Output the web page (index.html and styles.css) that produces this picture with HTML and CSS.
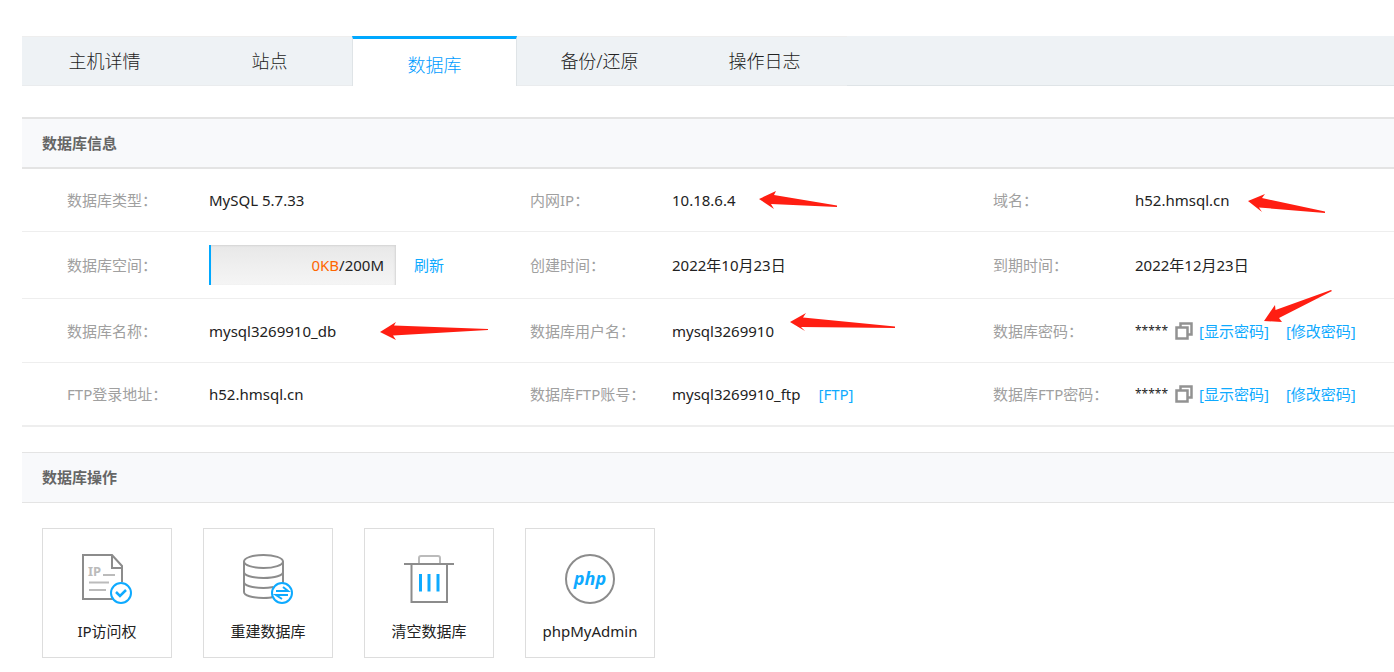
FILE: index.html
```html
<!DOCTYPE html>
<html lang="zh-CN">
<head>
<meta charset="utf-8">
<meta name="viewport" content="width=device-width, initial-scale=1">
<title>数据库</title>
<link rel="stylesheet" href="styles.css">
</head>
<body>
<svg class="symbols" aria-hidden="true">
  <symbol id="copy" viewBox="0 0 18 18">
    <path fill="none" stroke="#929292" stroke-width="2.500" d="M5.500 1.500h11v11h-11z"/>
    <path fill="#fff" stroke="#929292" stroke-width="2.500" d="M1.500 5.500h11v11h-11z"/>
  </symbol>
</svg>
<nav class="tabs">
  <a class="tab" href="#">主机详情</a>
  <a class="tab" href="#">站点</a>
  <a class="tab active" href="#" aria-current="page">数据库</a>
  <a class="tab" href="#">备份/还原</a>
  <a class="tab" href="#">操作日志</a>
</nav>
<main>
  <section class="panel">
    <h2 class="heading strong">数据库信息</h2>
    <table class="info">
      <colgroup>
        <col class="label"><col class="value"><col class="label"><col class="value"><col class="label"><col>
      </colgroup>
      <tbody>
        <tr>
          <th scope="row">数据库类型：</th><td>MySQL 5.7.33</td>
          <th scope="row">内网IP：</th><td>10.18.6.4</td>
          <th scope="row">域名：</th><td>h52.hmsql.cn</td>
        </tr>
        <tr class="tall">
          <th scope="row">数据库空间：</th>
          <td><div class="line space"><span class="quota"><span class="used">0KB</span>/200M</span><button class="link" type="button">刷新</button></div></td>
          <th scope="row">创建时间：</th><td>2022年10月23日</td>
          <th scope="row">到期时间：</th><td>2022年12月23日</td>
        </tr>
        <tr class="middle">
          <th scope="row">数据库名称：</th><td>mysql3269910_db</td>
          <th scope="row">数据库用户名：</th><td>mysql3269910</td>
          <th scope="row">数据库密码：</th>
          <td><div class="line secret"><span class="stars">*****</span><button class="copy" type="button" aria-label="复制"><svg width="18" height="18"><use href="#copy"/></svg></button><button class="link" type="button">[显示密码]</button><button class="link next" type="button">[修改密码]</button></div></td>
        </tr>
        <tr>
          <th scope="row">FTP登录地址：</th><td>h52.hmsql.cn</td>
          <th scope="row">数据库FTP账号：</th>
          <td><div class="line space"><span>mysql3269910_ftp</span><a class="link" href="#">[FTP]</a></div></td>
          <th scope="row">数据库FTP密码：</th>
          <td><div class="line secret"><span class="stars">*****</span><button class="copy" type="button" aria-label="复制"><svg width="18" height="18"><use href="#copy"/></svg></button><button class="link" type="button">[显示密码]</button><button class="link next" type="button">[修改密码]</button></div></td>
        </tr>
      </tbody>
    </table>
  </section>
  <section class="panel operations">
    <h2 class="heading">数据库操作</h2>
    <div class="cards">
      <button class="card" type="button">
        <svg width="50" height="50" viewBox="0 0 50 50" fill="none" stroke="#8c8c8c" stroke-width="2">
          <path d="M40 28V12L30 1H1v44h31M30 1v13h10"/>
          <path stroke="#bbb" d="M21 21h12M7 28.500h20M7 36h17"/>
          <text class="ip" x="6" y="22">IP</text>
          <circle cx="39" cy="39" r="10" fill="#fff" stroke="#0eaaff"/>
          <path stroke="#0eaaff" stroke-width="2.500" d="m34 38 4 4 6-6"/>
        </svg>
        IP访问权
      </button>
      <button class="card" type="button">
        <svg width="50" height="50" viewBox="0 0 50 50" fill="none" stroke="#8c8c8c" stroke-width="2">
          <ellipse cx="20.500" cy="7.500" rx="19.500" ry="6.500"/>
          <path d="M1 7.500V38c0 3.500 8 6 19.500 6 3.500 0 6.500 0 9-1M40 7.500V29M1 18c0 3.500 8 6 19.500 6S40 21.500 40 18M1 28c0 3.500 8 6 19.500 6 4 0 7-.5 10-1"/>
          <circle cx="39" cy="39" r="10" fill="#fff" stroke="#0eaaff"/>
          <path stroke="#0eaaff" d="M33 37h12l-5-4M45 41H33l6 4"/>
        </svg>
        重建数据库
      </button>
      <button class="card" type="button">
        <svg width="50" height="50" viewBox="0 0 50 50" fill="none" stroke="#8c8c8c" stroke-width="2">
          <path stroke="#bbb" d="M15 10V4q0-2 2-2h17q2 0 2 2v6"/>
          <path d="M0 10h50M7.500 10v38h35.500V10"/>
          <path stroke="#0eaaff" stroke-width="3" d="M16.500 20v17.500M25 20v17.500M34 20v17.500"/>
        </svg>
        清空数据库
      </button>
      <button class="card" type="button">
        <svg width="50" height="50" viewBox="0 0 50 50">
          <circle cx="25" cy="25" r="24" fill="none" stroke="#8c8c8c" stroke-width="2"/>
          <text class="php" x="25" y="31" text-anchor="middle">php</text>
        </svg>
        phpMyAdmin
      </button>
    </div>
  </section>
</main>
<svg class="arrows" width="1394" height="672" viewBox="0 0 1394 672" fill="#ff1e12" aria-hidden="true">
  <path d="M759 199 776 191 774 195 837 205.500 837 207 771 204 774 209z"/>
  <path d="M790 322 806 313 803 317.500 895 326.500 895 328 801 327 805 331z"/>
  <path d="M1248 201 1265 194 1262 198 1325 211.500 1325 213 1259 207.500 1262 212z"/>
  <path d="M1264 321 1275 305 1275.500 310 1331 290 1332 291 1279 318 1282 322z"/>
  <path d="M380 332 396 322 394 325.500 488 329 488 330 393 335.500 396 340z"/>
</svg>
</body>
</html>
```
FILE: styles.css
```css
* {
  box-sizing: border-box;
}

body {
  position: relative;
  margin: 0;
  padding: 36px 0 14px 22px;
  background: #fff;
  color: #222;
  font: 15px/24px "Noto Sans", "Noto Sans CJK SC", sans-serif;
}

button {
  padding: 0;
  border: 0;
  background: none;
  color: inherit;
  font: inherit;
  cursor: pointer;
}

.symbols {
  display: none;
}

.tabs {
  display: flex;
  background: #eef2f5;
  box-shadow: inset 0 -1px #dfe4e7;
}

.tab {
  width: 165px;
  height: 50px;
  border-top: 1px solid #eee;
  border-bottom: 1px solid #eaecee;
  color: #222;
  font-size: 18px;
  font-weight: 300;
  line-height: 49px;
  text-align: center;
  text-decoration: none;
}

.tab.active {
  border: 1px solid #dfe4e7;
  border-top: 3px solid #00a8ff;
  border-bottom: 0;
  background: #fff;
  color: #009cff;
  line-height: 52px;
}

.panel {
  margin-top: 31px;
}

.panel.operations {
  margin-top: 25px;
}

.heading {
  margin: 0;
  padding: 12px 20px;
  border: solid #e4e4e4;
  border-width: 1px 0;
  background: #f8f9fb;
  color: #666;
  font-size: 15px;
  font-weight: 700;
  line-height: 25px;
}

.heading.strong {
  border-width: 2px 0;
  line-height: 24px;
}

.info {
  width: 100%;
  border-collapse: separate;
  border-spacing: 0;
  border-bottom: 1px solid #eee;
  table-layout: fixed;
}

.info .label {
  width: 187px;
}

.info .value {
  width: 276px;
}

.info th,
.info td {
  height: 63px;
  padding: 0;
  border-bottom: 1px solid #eee;
  text-align: left;
  white-space: nowrap;
}

.info .middle th,
.info .middle td {
  height: 64px;
}

.info .tall th,
.info .tall td {
  height: 67px;
}

.info th {
  padding-left: 45px;
  color: #a0a0a0;
  font-weight: 400;
}

.line {
  display: flex;
  align-items: center;
}

.space {
  gap: 18px;
}

.quota {
  width: 187px;
  padding: 8px 12px;
  border-left: 2px solid #00a8ff;
  background: linear-gradient(#e8e8e8, #f5f5f5);
  box-shadow: inset -1px 1px 2px #d4d4d4;
  text-align: right;
}

.used {
  color: #ff6600;
}

.link {
  color: #0eaaff;
  text-decoration: none;
}

.stars {
  width: 40px;
  font-size: 12px;
}

.copy {
  display: flex;
  margin-right: 6px;
}

.next {
  margin-left: 17px;
}

.cards {
  display: flex;
  flex-wrap: wrap;
  gap: 31px;
  padding: 25px 20px 0;
}

.card {
  display: flex;
  flex-direction: column;
  align-items: center;
  gap: 15px;
  width: 130px;
  height: 130px;
  padding-top: 25px;
  border: 1px solid #ddd;
}

.ip {
  fill: #bbb;
  stroke: none;
  font-size: 13px;
  font-weight: 700;
}

.php {
  fill: #0eaaff;
  font-family: "Open Sans", sans-serif;
  font-size: 18px;
  font-style: italic;
  font-weight: 700;
}

.arrows {
  position: absolute;
  top: 0;
  left: 0;
  pointer-events: none;
}
```
